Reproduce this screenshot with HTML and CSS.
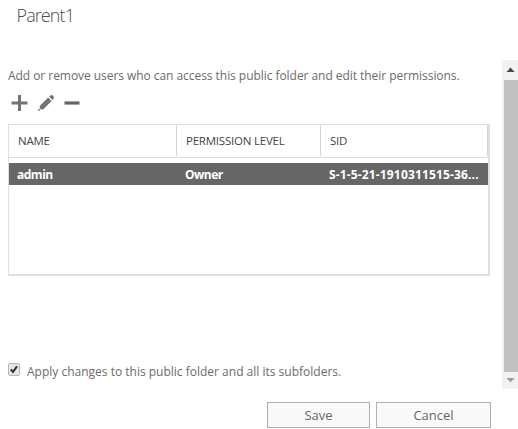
FILE: index.html
```html
<!DOCTYPE html>
<html lang="en">
<head>
<meta charset="utf-8">
<title>Parent1</title>
<link rel="stylesheet" href="styles.css">
</head>
<body>
<div class="dialog">
  <h1 class="title"><span>Parent1</span></h1>
  <div class="body">
    <main class="content">
      <p class="intro"><span>Add or remove users who can access this public folder and edit their permissions.</span></p>
      <div class="toolbar">
        <svg class="icon" viewBox="0 0 18 18"><path d="M8.5 1v16M.5 9h16" stroke="#737373" stroke-width="3"/></svg>
        <svg class="icon" viewBox="0 0 18 18" fill="#737373"><path d="M2.7 12.1 11.2 3.6 14.6 7 6.1 15.5 2.9 15z"/><path d="m12.2 2.6 1.2-1.2q1.4-.9 2.7.4t.6 2.8l-1.2 1.3z"/><path d="m1.7 14.5 1.8 1.8-2.5.8z"/></svg>
        <svg class="icon" viewBox="0 0 18 18"><path d="M1.5 9h15" stroke="#666" stroke-width="3.2"/></svg>
      </div>
      <div class="list">
        <div class="row head">
          <div class="cell"><span>NAME</span></div>
          <div class="cell"><span>PERMISSION LEVEL</span></div>
          <div class="cell"><span>SID</span></div>
        </div>
        <div class="row selected">
          <div class="cell tight"><span>admin</span></div>
          <div class="cell tight"><span>Owner</span></div>
          <div class="cell"><span class="sid">S-1-5-21-1910311515-36...</span></div>
        </div>
      </div>
      <label class="apply">
        <svg class="check" viewBox="0 0 12 13"><rect x=".5" y=".5" width="11" height="12" rx="1.5" fill="#e6e6e6" stroke="#b5b5b5"/><path d="m2.8 6.5 2.2 2.4 4-5.6" fill="none" stroke="#333" stroke-width="2.1"/></svg>
        <span>Apply changes to this public folder and all its subfolders.</span>
      </label>
    </main>
    <div class="scrollbar">
      <svg class="arrow" viewBox="0 0 16 20"><path d="M4.5 12 8.5 7.6 12.7 12z" fill="#484848"/></svg>
      <div class="thumb"></div>
      <svg class="arrow down" viewBox="0 0 16 17"><path d="M4.5 6h8.2L8.6 10.3z" fill="#9c9c9c"/></svg>
    </div>
  </div>
  <div class="footer">
    <button class="btn save"><span>Save</span></button>
    <button class="btn cancel"><span>Cancel</span></button>
  </div>
</div>
</body>
</html>
```
FILE: styles.css
```css
* { box-sizing: border-box; }
body {
  margin: 0;
  background: #fff;
  color: #6b6b6b;
  font: 12px/18px "Open Sans", "Noto Sans", sans-serif;
  white-space: nowrap;
  overflow: hidden;
}
.dialog { width: 518px; height: 429px; display: flex; flex-direction: column; }
.title {
  margin: 0;
  height: 60px;
  padding: 3px 0 0 16.5px;
  font-size: 18px;
  line-height: 25px;
  font-weight: 300;
  letter-spacing: -0.9px;
  color: #4c4c4c;
}
.body { display: flex; height: 329px; }
.content { width: 502px; padding: 7px 0 0 8px; }
.intro { margin: 0; height: 18px; letter-spacing: -0.05px; }
.toolbar { display: flex; gap: 8px; height: 39px; padding: 9px 0 0 3px; }
.icon { width: 18px; height: 18px; }
.list {
  width: 482px;
  height: 152px;
  border: 1px solid #dbe0e2;
  border-width: 1px 2px 2px 1px;
}
.row { display: grid; grid-template-columns: 168px 144px 167px; }
.cell { padding-left: 9px; }
.head {
  height: 33px;
  border-bottom: 1px solid #d8dddf;
  color: #444;
  font-size: 11.5px;
  letter-spacing: -0.22px;
  line-height: 32px;
}
.head .cell { height: 31px; border-right: 1px solid #cfd5d7; }
.selected {
  height: 22px;
  margin-top: 5px;
  background: #666;
  color: #fff;
  font-weight: 700;
  line-height: 23px;
}
.selected .cell { padding-left: 8px; }
.tight { letter-spacing: -0.5px; }
.sid { letter-spacing: 0.15px; }
.apply { display: flex; margin-top: 87px; }
.check { width: 12px; height: 13px; margin-right: 7px; }
.scrollbar { width: 16px; background: #f1f1f1; display: flex; flex-direction: column; }
.arrow { width: 16px; height: 20px; }
.down { height: 17px; }
.thumb { flex: 1; margin-left: 2px; background: #c1c1c1; }
.footer { display: flex; gap: 6px; padding: 13px 0 0 267px; }
.btn {
  height: 26px;
  padding: 0;
  border: 1px solid #a9b1b3;
  background: #f9f9f9;
  color: #666;
  font: 13px/25px "Open Sans", "Noto Sans", sans-serif;
}
.save { width: 103px; }
.cancel { width: 115px; }
```
